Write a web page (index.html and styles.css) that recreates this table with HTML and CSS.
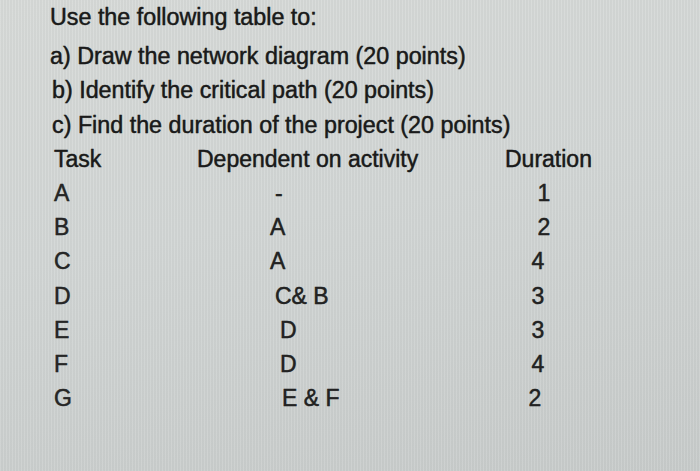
FILE: index.html
```html
<!DOCTYPE html>
<html lang="en">
<head>
<meta charset="utf-8">
<title>Project table</title>
<link rel="stylesheet" href="styles.css">
</head>
<body>
<main class="sheet">
  <div class="intro">
    <p class="line first">Use the following table to:</p>
    <p class="line">a) Draw the network diagram (20 points)</p>
    <p class="line indent">b) Identify the critical path (20 points)</p>
    <p class="line indent">c) Find the duration of the project (20 points)</p>
  </div>
  <div class="table">
    <div class="row head">
      <span class="task">Task</span>
      <span class="dep">Dependent on activity</span>
      <span class="dur">Duration</span>
    </div>
    <div class="row"><span class="task">A</span><span class="dep val v-dash">-</span><span class="dur val d-r1">1</span></div>
    <div class="row"><span class="task">B</span><span class="dep val v-a">A</span><span class="dur val d-r1">2</span></div>
    <div class="row"><span class="task">C</span><span class="dep val v-a">A</span><span class="dur val d-r2">4</span></div>
    <div class="row"><span class="task">D</span><span class="dep val v-cb">C&amp; B</span><span class="dur val d-r2">3</span></div>
    <div class="row"><span class="task">E</span><span class="dep val v-d">D</span><span class="dur val d-r2">3</span></div>
    <div class="row"><span class="task">F</span><span class="dep val v-d">D</span><span class="dur val d-r2">4</span></div>
    <div class="row"><span class="task">G</span><span class="dep val v-ef">E &amp; F</span><span class="dur val d-r3">2</span></div>
  </div>
</main>
</body>
</html>
```

FILE: styles.css
```css
html, body {
  margin: 0;
  padding: 0;
  width: 700px;
  height: 471px;
  overflow: hidden;
}

body {
  background:
    repeating-linear-gradient(90deg, rgba(255,255,255,0.07) 0 1px, rgba(0,0,0,0.025) 1px 3px),
    linear-gradient(170deg, #d7dad8 0%, #d2d6d5 45%, #c8cccb 100%);
  font-family: "Liberation Sans", Arial, Helvetica, sans-serif;
  color: #1a1a1a;
  -webkit-text-stroke: 0.3px currentColor;
  text-shadow: 0 0 0.7px rgba(0, 0, 0, 0.45);
}

.sheet {
  display: flex;
  flex-direction: column;
}

.intro {
  padding-left: 50px;
}

.line {
  margin: 0;
  font-size: 23.3px;
  line-height: 34.2px;
  white-space: nowrap;
}

.line.first {
  margin-bottom: 5px;
}

.line.indent {
  padding-left: 2px;
}

.table {
  display: flex;
  flex-direction: column;
  padding-left: 54px;
}

.row {
  display: grid;
  grid-template-columns: 143px 308px 86px;
  font-size: 23px;
  line-height: 34.2px;
  white-space: nowrap;
}

.row .task {
  color: #262626;
}

.head .task,
.head .dep,
.head .dur {
  color: #1a1a1a;
}

.dur.val {
  text-align: center;
  color: #222;
}

.d-r1 { padding-right: 8px; }
.d-r2 { padding-right: 20px; }
.d-r3 { padding-right: 26px; }

.dep.val {
  color: #222;
}

.v-dash { padding-left: 78px; }
.v-a { padding-left: 73px; }
.v-cb { padding-left: 78px; }
.v-d { padding-left: 83px; }
.v-ef { padding-left: 85px; }
```
